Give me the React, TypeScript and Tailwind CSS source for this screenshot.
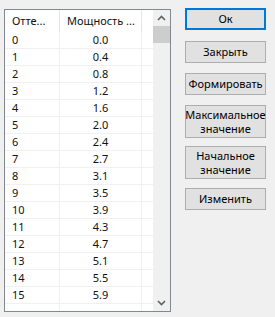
import React from "react";

const rows: [string, string][] = [
  ["0", "0.0"], ["1", "0.4"], ["2", "0.8"], ["3", "1.2"], ["4", "1.6"], ["5", "2.0"],
  ["6", "2.4"], ["7", "2.7"], ["8", "3.1"], ["9", "3.5"], ["10", "3.9"], ["11", "4.3"],
  ["12", "4.7"], ["13", "5.1"], ["14", "5.5"], ["15", "5.9"],
];

function Btn({ children, primary, tall }: { children: React.ReactNode; primary?: boolean; tall?: boolean }) {
  return (
    <div
      className={
        "w-[81px] flex items-center justify-center text-center leading-[14px] text-black bg-[#e1e1e1] " +
        (tall ? "h-[33px] " : "h-[22px] ") +
        (primary ? "border-2 border-[#0078d7]" : "border border-[#adadad]")
      }
    >
      {children}
    </div>
  );
}

export default function App() {
  return (
    <div
      className="w-[275px] h-[317px] bg-[#f0f0f0] flex text-[11px] text-[#111]"
      style={{ fontFamily: '"Noto Sans", sans-serif' }}
    >
      <div className="ml-[4px] mt-[9px] w-[167px] h-[303px] border border-[#828790] bg-white flex overflow-hidden">
        <div className="w-[148px] flex flex-col">
          <div className="h-[22px] flex shrink-0">
            <div className="w-[55px] border-r border-[#e5e5e5] pl-[7px] flex items-center">Отте...</div>
            <div className="w-[82px] border-r border-[#e5e5e5] pl-[7px] flex items-center whitespace-nowrap">Мощность ...</div>
            <div className="flex-1"></div>
          </div>
          {rows.map(([a, b]) => (
            <div key={a} className="h-[17px] flex shrink-0 border-b border-[#f0f0f0]">
              <div className="w-[55px] border-r border-[#f0f0f0] pl-[7px] flex items-center">{a}</div>
              <div className="w-[82px] border-r border-[#f0f0f0] flex items-center justify-center">{b}</div>
              <div className="flex-1"></div>
            </div>
          ))}
          <div className="flex flex-1">
            <div className="w-[55px] border-r border-[#f0f0f0]"></div>
            <div className="w-[82px] border-r border-[#f0f0f0]"></div>
          </div>
        </div>
        <div className="w-[17px] bg-[#f0f0f0] flex flex-col items-center">
          <div className="h-[16px] w-full flex items-center justify-center">
            <svg width="9" height="6" viewBox="0 0 9 6">
              <path d="M1 5 L4.5 1.5 L8 5" stroke="#606060" strokeWidth="1.6" fill="none" />
            </svg>
          </div>
          <div className="w-[17px] h-[17px] bg-[#cdcdcd]"></div>
          <div className="flex-1"></div>
          <div className="h-[16px] w-full flex items-center justify-center">
            <svg width="9" height="6" viewBox="0 0 9 6">
              <path d="M1 1 L4.5 4.5 L8 1" stroke="#606060" strokeWidth="1.6" fill="none" />
            </svg>
          </div>
        </div>
      </div>
      <div className="ml-[14px] mt-[8px] flex flex-col">
        <Btn primary>Ок</Btn>
        <div className="mt-[11px]"><Btn>Закрыть</Btn></div>
        <div className="mt-[10px]"><Btn>Формировать</Btn></div>
        <div className="mt-[10px]"><Btn tall>Максимальное<br />значение</Btn></div>
        <div className="mt-[8px]"><Btn tall>Начальное<br />значение</Btn></div>
        <div className="mt-[9px]"><Btn>Изменить</Btn></div>
      </div>
    </div>
  );
}
